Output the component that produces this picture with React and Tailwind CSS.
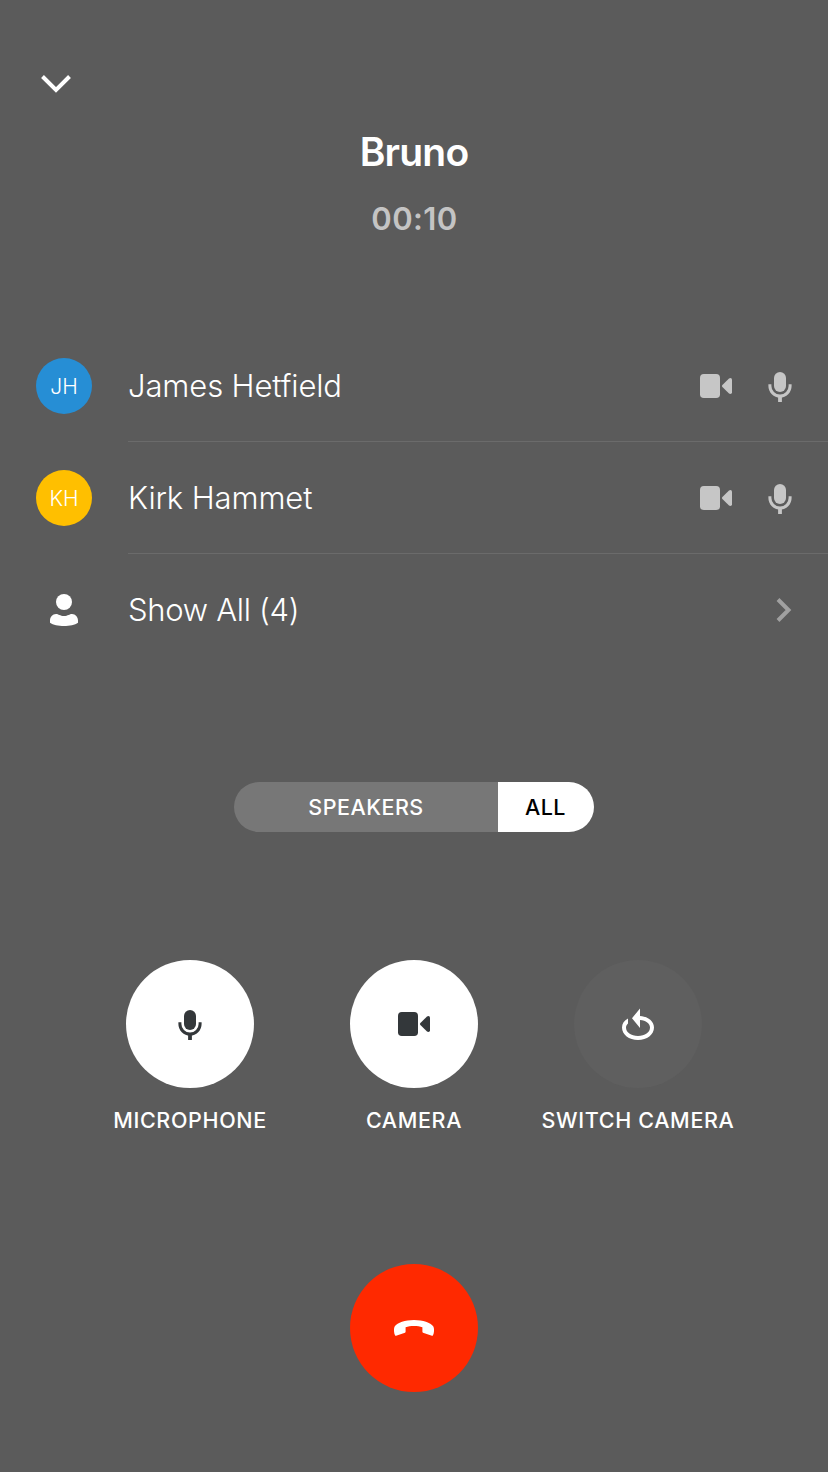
function MicIcon({ className }) {
  return (
    <svg width="32" height="32" viewBox="0 0 32 32" fill="currentColor" className={className}>
      <rect x="10" y="2" width="12" height="20" rx="6" />
      <path
        d="M5.9 14.3V16a10.1 10.1 0 0 0 20.2 0V14.3"
        fill="none"
        stroke="currentColor"
        strokeWidth="3"
      />
      <path d="M14.1 26h3.8v6h-3.8z" />
    </svg>
  );
}

function CameraIcon({ className }) {
  return (
    <svg width="32" height="32" viewBox="0 0 32 32" fill="currentColor" className={className}>
      <rect x="0" y="4" width="20" height="24" rx="3.8" />
      <path d="M22.4 14.9 29 8.4Q29.6 8 30.4 8 32 8 32 9.7V22.3Q32 24 30.4 24 29.6 24 29 23.6L22.4 17.1Q21.4 16 22.4 14.9Z" />
    </svg>
  );
}

function PersonIcon() {
  return (
    <svg width="32" height="32" viewBox="0 0 32 32" fill="currentColor">
      <circle cx="16" cy="8" r="8" />
      <path d="M2 26.5C2 23 4.5 20 8 20c2.500 0 4 2 8 2s5.500-2 8-2c3.500 0 6 3 6 6.500V28.700C27 31 21.500 32 16 32S5 31 2 28.700Z" />
    </svg>
  );
}

function SwitchIcon() {
  return (
    <svg width="32" height="32" viewBox="0 0 32 32" fill="currentColor">
      <path d="M18 0.500V7.900C26 8.600 32 13.200 32 19.500 32 26.700 25 32 16 32S0 26.700 0 19.500C0 15.700 2.200 12.700 6 10.600V15.400C4.600 16.600 4 18 4 19.500 4 24.400 9 28 16 28S28 24.400 28 19.500C28 15.600 24 12.500 18 12V20L10 10.200Z" />
    </svg>
  );
}

function HangUpIcon() {
  return (
    <svg width="40" height="16" viewBox="0 0 40 16" fill="currentColor">
      <path d="M20 0C29 0 36.500 2.800 39.200 6.300 40.400 8 40.300 12.500 39 15.300Q38.600 16 37.900 15.800L29 12.700Q28.400 12.500 28.400 11.800V7.300C26 6.300 23.300 6 20 6S14 6.300 11.600 7.300V11.800Q11.600 12.500 11 12.700L2.100 15.800Q1.400 16 1 15.300C-.3 12.500-.4 8 .8 6.300 3.500 2.800 11 0 20 0Z" />
    </svg>
  );
}

function Participant({ initials, name, color }) {
  return (
    <li className="flex h-28 items-center pl-9">
      <span
        className={`flex size-14 shrink-0 items-center justify-center rounded-full pt-0.5 text-[21px] font-light ${color}`}
      >
        {initials}
      </span>
      <div className="ml-9 flex h-full flex-1 items-center border-b border-[#6b6b6b] pr-8">
        <span className="flex-1 pt-px text-[31px] font-light tracking-[-0.12px]">{name}</span>
        <CameraIcon className="mr-8 text-[#c6c6c6]" />
        <MicIcon className="text-[#c6c6c6]" />
      </div>
    </li>
  );
}

function CallControl({ label, buttonClass, children }) {
  return (
    <div className="flex w-56 flex-col items-center">
      <button className={`flex size-32 items-center justify-center rounded-full ${buttonClass}`}>
        {children}
      </button>
      <span className="mt-4 text-[21.5px] leading-8 font-medium tracking-[0.65px] whitespace-nowrap">
        {label}
      </span>
    </div>
  );
}

export default function App() {
  return (
    <main className="flex h-[1472px] w-[828px] flex-col overflow-hidden bg-[#5b5b5b] font-['Inter',sans-serif] text-white">
      <header className="flex h-[330px] flex-col pt-[68px]">
        <button className="ml-10 size-8" aria-label="Minimize">
          <svg width="32" height="32" viewBox="0 0 32 32" fill="none" stroke="currentColor" strokeWidth="4">
            <path d="M2.500 8.500 16 22 29.500 8.500" />
          </svg>
        </button>
        <h1 className="mt-7 text-center text-[39px] leading-[48px] font-semibold tracking-[-0.8px]">
          Bruno
        </h1>
        <p className="mt-[23px] pl-px text-center text-[31px] leading-10 font-semibold tracking-[0.4px] text-[#c4c4c4]">
          00:10
        </p>
      </header>

      <ul>
        <Participant initials="JH" name="James Hetfield" color="bg-[#268ed5]" />
        <Participant initials="KH" name="Kirk Hammet" color="bg-[#ffbf00]" />
        <li className="flex h-28 items-center pr-7 pl-12">
          <PersonIcon />
          <span className="ml-12 flex-1 pt-px text-[31px] font-light tracking-[-0.3px]">
            Show All (4)
          </span>
          <svg
            width="32"
            height="32"
            viewBox="0 0 32 32"
            fill="none"
            stroke="currentColor"
            strokeWidth="4"
            className="text-[#a0a0a0]"
          >
            <path d="M10 5.500 20.500 16 10 26.500" />
          </svg>
        </li>
      </ul>

      <div className="mx-auto mt-[116px] flex h-[50px] w-[360px] overflow-hidden rounded-[25px] text-[21.5px]">
        <button className="w-[264px] bg-[#777777] pt-px font-medium tracking-[0.5px]">SPEAKERS</button>
        <button className="flex-1 bg-white pt-px pr-px font-medium tracking-[0.4px] text-black">
          ALL
        </button>
      </div>

      <div className="mt-32 flex justify-center">
        <CallControl label="MICROPHONE" buttonClass="bg-white text-[#33373a]">
          <MicIcon />
        </CallControl>
        <CallControl label="CAMERA" buttonClass="bg-white text-[#33373a]">
          <CameraIcon />
        </CallControl>
        <CallControl label="SWITCH CAMERA" buttonClass="bg-[#5f5f5f]">
          <SwitchIcon />
        </CallControl>
      </div>

      <button
        className="mx-auto mt-32 flex size-32 items-center justify-center rounded-full bg-[#ff2900]"
        aria-label="End call"
      >
        <HangUpIcon />
      </button>
    </main>
  );
}
